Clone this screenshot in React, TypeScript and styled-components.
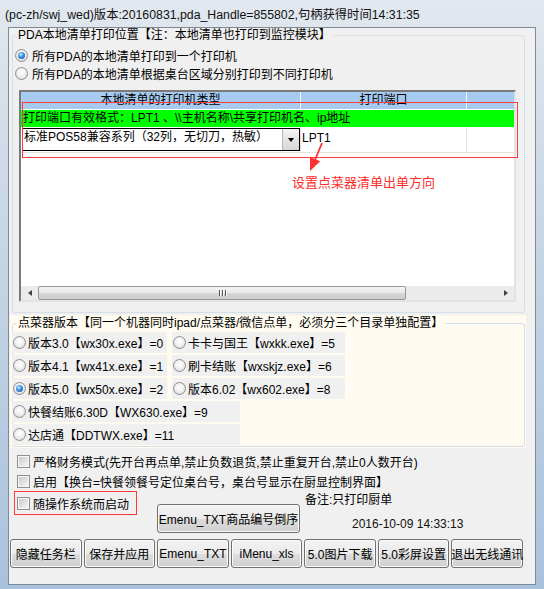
import React, { FC } from 'react';
import styled, { createGlobalStyle } from 'styled-components';

const GlobalStyle = createGlobalStyle`
  html, body {
    margin: 0;
    padding: 0;
  }

  body {
    width: 544px;
    height: 589px;
    overflow: hidden;
    font-family: 'Liberation Sans', 'Noto Sans CJK SC', sans-serif;
    font-size: 12px;
    color: #000;
  }
`;

const Window = styled.div`
  box-sizing: border-box;
  display: flex;
  flex-direction: column;
  width: 544px;
  height: 589px;
  padding-bottom: 4px;
  background: linear-gradient(180deg, #e2e8ef 0%, #cdd9e6 30%, #a9c2dc 100%);
`;

const TitleBar = styled.div`
  display: flex;
  align-items: center;
  height: 27px;
  padding-left: 5px;
  font-size: 12.3px;
  color: #111;
  white-space: nowrap;
`;

const Client = styled.div`
  flex: 1;
  display: flex;
  flex-direction: column;
  margin: 0 8px;
  border: 1px solid #7d8b99;
  background: #f0f0f0;
`;

/* group boxes */

const GroupBox = styled.fieldset`
  margin: 0;
  padding: 0;
  min-width: 0;
  border: 1px solid #d5dfe5;
  border-radius: 3px;
`;

const GroupTitle = styled.legend`
  margin-left: 3px;
  padding: 0 2px;
  line-height: 14px;
  white-space: nowrap;
`;

const PrintGroup = styled(GroupBox)`
  margin: 0 10px 0 3px;
  padding-bottom: 10px;
`;

const RadioList = styled.div`
  margin-top: 4px;
`;

const RadioLine = styled.label`
  display: flex;
  align-items: center;
  gap: 4px;
  height: 18px;
  padding-left: 2px;
  white-space: nowrap;
`;

interface MarkProps {
  $on?: boolean;
}

const RadioDot = styled.span<MarkProps>`
  flex: none;
  display: flex;
  align-items: center;
  justify-content: center;
  box-sizing: border-box;
  width: 13px;
  height: 13px;
  border: 1px solid #8e8f8f;
  border-radius: 50%;
  background: radial-gradient(circle at 50% 40%, #ffffff 0%, #f1f1f1 45%, #cfcfcf 100%);

  &::after {
    content: '';
    display: ${({ $on }) => ($on ? 'block' : 'none')};
    width: 7px;
    height: 7px;
    border-radius: 50%;
    background: radial-gradient(circle at 40% 35%, #c4e8ff 0%, #3d8fe0 45%, #0c4a94 100%);
  }
`;

const CheckMark = styled.span`
  flex: none;
  box-sizing: border-box;
  width: 13px;
  height: 13px;
  border: 1px solid #8e8f8f;
  background: linear-gradient(135deg, #c3c7cc 0%, #eeeeee 80%);
  box-shadow: inset 0 0 0 1px #f7f7f7;
`;

/* printer table */

const PrinterTable = styled.div`
  position: relative;
  display: flex;
  flex-direction: column;
  box-sizing: border-box;
  height: 212px;
  margin: 8px 8px 0 6px;
  border: 2px solid;
  border-color: #7a7a7a #e3e3e3 #e3e3e3 #7a7a7a;
  background: #fff;
`;

const HeaderRow = styled.div`
  display: grid;
  grid-template-columns: 280px 166px 1fr;
  height: 17px;
  margin-bottom: 1px;
  background: #a6caf0;
`;

const HeaderCell = styled.div`
  border-right: 1px solid #f4f8fc;
  line-height: 17px;
  text-align: center;
  white-space: nowrap;

  &:last-child {
    border-right: 0;
  }
`;

const HintRow = styled.div`
  height: 17px;
  padding-left: 2px;
  line-height: 17px;
  background: #00ff00;
  white-space: nowrap;
`;

const DataRow = styled.div`
  display: grid;
  grid-template-columns: 280px 166px 1fr;
  box-sizing: border-box;
  height: 26px;
  border-bottom: 1px solid #e3e3e3;
`;

const DataCell = styled.div`
  padding: 1px 0 0 1px;
  border-right: 1px solid #e3e3e3;
  line-height: 20px;
  white-space: nowrap;

  &:last-child {
    border-right: 0;
  }
`;

const Combo = styled.div`
  display: flex;
  box-sizing: border-box;
  width: 278px;
  height: 23px;
  border: 1px solid #000;
  background: #fff;
`;

const ComboText = styled.div`
  flex: 1;
  padding-left: 1px;
  line-height: 17px;
  overflow: hidden;
  white-space: nowrap;
`;

const DropButton = styled.div`
  display: flex;
  align-items: center;
  justify-content: center;
  width: 16px;
  border-left: 1px solid #b5b5b5;
  background: linear-gradient(180deg, #f6f6f6 0%, #e4e4e4 50%, #d6d6d6 100%);

  &::before {
    content: '';
    border-left: 3.5px solid transparent;
    border-right: 3.5px solid transparent;
    border-top: 4px solid #000;
  }
`;

const TableBody = styled.div`
  flex: 1;
`;

const HScroll = styled.div`
  display: flex;
  height: 14px;
  background: #ebebeb;
`;

interface ArrowProps {
  $dir: 'left' | 'right';
}

const ScrollArrow = styled.div<ArrowProps>`
  display: flex;
  align-items: center;
  justify-content: center;
  width: 17px;

  &::before {
    content: '';
    border-top: 3.5px solid transparent;
    border-bottom: 3.5px solid transparent;
    ${({ $dir }) =>
      $dir === 'left' ? 'border-right: 4px solid #404040;' : 'border-left: 4px solid #404040;'}
  }
`;

const ScrollThumb = styled.div`
  display: flex;
  align-items: center;
  justify-content: center;
  gap: 2px;
  box-sizing: border-box;
  width: 368px;
  border: 1px solid #979797;
  border-radius: 2px;
  background: linear-gradient(180deg, #f4f4f4 0%, #e9e9e9 50%, #d7d7d7 51%, #cdcdcd 100%);
`;

const Grip = styled.span`
  width: 1px;
  height: 6px;
  background: #555;
  box-shadow: 1px 0 #fafafa;
`;

const ScrollTrack = styled.div`
  flex: 1;
`;

/* annotations drawn on top of the screenshot */

const RedFrame = styled.div`
  position: absolute;
  left: 1px;
  top: 10px;
  width: 494px;
  height: 54px;
  border: 1px solid #ff3b3b;
  pointer-events: none;
`;

const RedNote = styled.div`
  position: absolute;
  left: 271px;
  top: 83px;
  font-size: 13px;
  line-height: 16px;
  color: #ff2b2b;
  white-space: nowrap;
`;

const RedArrow = styled.svg`
  position: absolute;
  left: 285px;
  top: 48px;
`;

/* version group */

const VersionPanel = styled.div`
  margin: 2px 9px 0 1px;
  padding: 1px 1px 1px 2px;
  background: #fffbf0;
`;

const VersionGroup = styled(GroupBox)`
  padding-bottom: 1px;
`;

const VersionGrid = styled.div`
  display: grid;
  grid-template-columns: 155px 173px;
  column-gap: 5px;
  row-gap: 2px;
  margin: 2px 0 0 -1px;
`;

interface ItemProps {
  $wide?: boolean;
}

const VersionItem = styled.label<ItemProps>`
  display: flex;
  align-items: center;
  gap: 2px;
  height: 21px;
  padding-left: 1px;
  background: #f0f0f0;
  white-space: nowrap;

  ${({ $wide }) => $wide && 'grid-column: 1 / -1; width: 228px; box-sizing: border-box;'}
`;

/* options + buttons */

const CheckList = styled.div`
  margin-top: 3px;
`;

const CheckLine = styled.label`
  display: flex;
  align-items: center;
  gap: 3px;
  height: 20px;
  padding-left: 8px;
  white-space: nowrap;
`;

const Footer = styled.div`
  display: flex;
  align-items: flex-start;
  padding-left: 5px;
`;

const MarkedCheck = styled(CheckLine)`
  box-sizing: border-box;
  width: 123px;
  height: 24px;
  padding-left: 2px;
  border: 1px solid #ff3b3b;
`;

const WinButton = styled.button`
  display: flex;
  align-items: center;
  justify-content: center;
  box-sizing: border-box;
  height: 29px;
  padding: 0;
  border: 1px solid #707070;
  border-radius: 3px;
  background: linear-gradient(180deg, #f2f2f2 0%, #ebebeb 50%, #dddddd 51%, #cfcfcf 100%);
  box-shadow: inset 0 0 0 1px #fbfbfb;
  font: inherit;
  color: #000;
  white-space: nowrap;
`;

const SortButton = styled(WinButton)`
  width: 143px;
  margin: 13px 0 0 20px;
`;

const InfoColumn = styled.div`
  display: flex;
  flex-direction: column;
`;

const Remark = styled.div`
  padding: 2px 0 0 5px;
  line-height: 14px;
`;

const Stamp = styled.div`
  margin-top: 10px;
  padding-left: 52px;
  line-height: 14px;
  color: #111;
`;

const ButtonBar = styled.div`
  display: flex;
  gap: 2px;
  margin-top: 6px;
  padding: 0 12px 0 1px;
`;

const BarButton = styled(WinButton)`
  flex: 1;
  min-width: 0;
`;

const versions = [
  { text: '版本3.0【wx30x.exe】=0' },
  { text: '卡卡与国王【wxkk.exe】=5' },
  { text: '版本4.1【wx41x.exe】=1' },
  { text: '刷卡结账【wxskjz.exe】=6' },
  { text: '版本5.0【wx50x.exe】=2', on: true },
  { text: '版本6.02【wx602.exe】=8' },
  { text: '快餐结账6.30D【WX630.exe】=9', wide: true },
  { text: '达店通【DDTWX.exe】=11', wide: true },
];

const bottomButtons = [
  '隐藏任务栏',
  '保存并应用',
  'Emenu_TXT',
  'iMenu_xls',
  '5.0图片下载',
  '5.0彩屏设置',
  '退出无线通讯',
];

const Arrow: FC = () => (
  <RedArrow width="22" height="34" viewBox="0 0 22 34">
    <line x1="16" y1="3" x2="9" y2="20" stroke="#ff3030" strokeWidth="1.8" />
    <polygon points="4,31 14.2,21.3 4,16.9" fill="#ff3030" />
  </RedArrow>
);

const App: FC = () => (
  <Window>
    <GlobalStyle />
    <TitleBar>(pc-zh/swj_wed)版本:20160831,pda_Handle=855802,句柄获得时间14:31:35</TitleBar>
    <Client>
      <PrintGroup>
        <GroupTitle>PDA本地清单打印位置【注：本地清单也打印到监控模块】</GroupTitle>
        <RadioList>
          <RadioLine>
            <RadioDot $on />
            所有PDA的本地清单打印到一个打印机
          </RadioLine>
          <RadioLine>
            <RadioDot />
            所有PDA的本地清单根据桌台区域分别打印到不同打印机
          </RadioLine>
        </RadioList>
        <PrinterTable>
          <HeaderRow>
            <HeaderCell>本地清单的打印机类型</HeaderCell>
            <HeaderCell>打印端口</HeaderCell>
            <HeaderCell />
          </HeaderRow>
          <HintRow>{'打印端口有效格式：LPT1 、\\\\主机名称\\共享打印机名、ip地址'}</HintRow>
          <DataRow>
            <DataCell>
              <Combo>
                <ComboText>标准POS58兼容系列（32列，无切刀，热敏）</ComboText>
                <DropButton />
              </Combo>
            </DataCell>
            <DataCell>LPT1</DataCell>
            <DataCell />
          </DataRow>
          <TableBody />
          <HScroll>
            <ScrollArrow $dir="left" />
            <ScrollThumb>
              <Grip />
              <Grip />
              <Grip />
            </ScrollThumb>
            <ScrollTrack />
            <ScrollArrow $dir="right" />
          </HScroll>
          <RedFrame />
          <Arrow />
          <RedNote>设置点菜器清单出单方向</RedNote>
        </PrinterTable>
      </PrintGroup>

      <VersionPanel>
        <VersionGroup>
          <GroupTitle>点菜器版本【同一个机器同时ipad/点菜器/微信点单，必须分三个目录单独配置】</GroupTitle>
          <VersionGrid>
            {versions.map(({ text, on, wide }) => (
              <VersionItem key={text} $wide={wide}>
                <RadioDot $on={on} />
                {text}
              </VersionItem>
            ))}
          </VersionGrid>
        </VersionGroup>
      </VersionPanel>

      <CheckList>
        <CheckLine>
          <CheckMark />
          严格财务模式(先开台再点单,禁止负数退货,禁止重复开台,禁止0人数开台)
        </CheckLine>
        <CheckLine>
          <CheckMark />
          启用【换台=快餐领餐号定位桌台号，桌台号显示在厨显控制界面】
        </CheckLine>
      </CheckList>

      <Footer>
        <MarkedCheck>
          <CheckMark />
          随操作系统而启动
        </MarkedCheck>
        <SortButton>Emenu_TXT商品编号倒序</SortButton>
        <InfoColumn>
          <Remark>备注:只打印厨单</Remark>
          <Stamp>2016-10-09 14:33:13</Stamp>
        </InfoColumn>
      </Footer>

      <ButtonBar>
        {bottomButtons.map((label) => (
          <BarButton key={label}>{label}</BarButton>
        ))}
      </ButtonBar>
    </Client>
  </Window>
);

export default App;
